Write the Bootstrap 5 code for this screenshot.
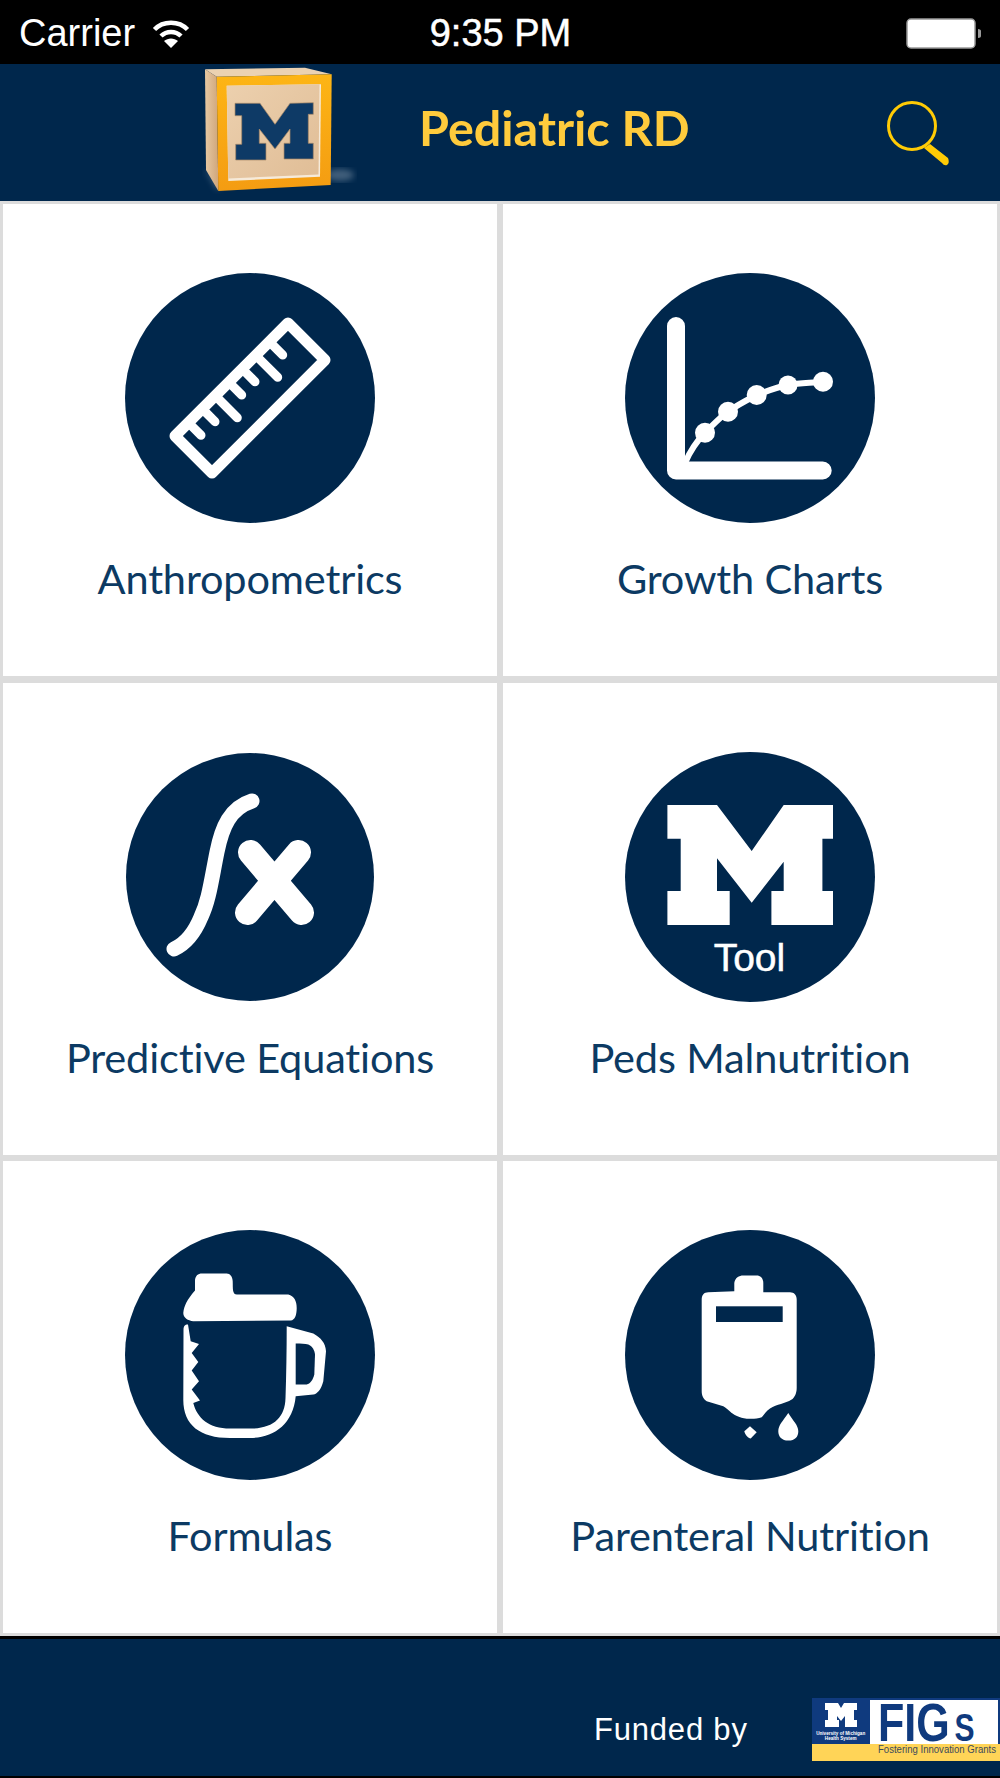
<!DOCTYPE html>
<html lang="en">
<head>
    <meta charset="UTF-8">
    <title>Pediatric RD</title>
    <link href="https://cdn.jsdelivr.net/npm/bootstrap@5.3.0/dist/css/bootstrap.min.css" rel="stylesheet">
    <style>
        html, body { background: #dcdcdc; }
        .app-screen { width: 1000px; height: 1778px; overflow: hidden; }

        .status-bar { height: 64px; background: #000; color: #fff; font-family: "Liberation Sans", Arial, sans-serif; padding: 3px 18px 0 19px; }
        .status-side { flex: 1 1 0; }
        .status-left { gap: 17px; font-size: 38px; }
        .status-time { width: 220px; text-align: center; font-size: 38px; -webkit-text-stroke: .5px #fff; }

        .app-header { height: 137px; background: #00274c; position: relative; }
        .header-block { position: absolute; left: 198px; top: 0; }
        .header-title { position: absolute; left: 419px; top: 34px; margin: 0; color: #ffcb3c; font-family: Lato, sans-serif; font-size: 48.500px; line-height: 58px; font-weight: 700; white-space: nowrap; font-variant-ligatures: none; }
        .header-search { position: absolute; left: 885px; top: 35px; }

        .tile-grid { display: grid; grid-template-columns: 494px 494px; grid-auto-rows: 472px; column-gap: 6px; row-gap: 6.500px; padding: 3px 3px 0; height: 1435px; }
        .tile-item { background: #fff; display: flex; flex-direction: column; align-items: center; padding-top: 69px; }
        .tile-icon { width: 250px; height: 250px; display: block; }
        .tile-label { margin-top: 30px; color: #0c3a63; font-family: Lato, sans-serif; font-size: 41.500px; line-height: 50px; letter-spacing: -.15px; white-space: nowrap; font-variant-ligatures: none; }

        .app-footer { height: 142px; background: #00274c; border-top: 3px solid #000; border-bottom: 2px solid #000; position: relative; }
        .funded-text { position: absolute; left: 594px; top: 73px; color: #fff; font-family: "Liberation Sans", Arial, sans-serif; font-size: 31px; line-height: 36px; letter-spacing: .8px; }
        .figs-logo { position: absolute; left: 812px; top: 49px; }
        .figs-logo text { font-family: "Liberation Sans", Arial, sans-serif; }
    </style>
</head>
<body class="m-0">
    <div class="app-screen d-flex flex-column">

        <!-- status bar -->
        <div class="status-bar d-flex align-items-center flex-shrink-0">
            <div class="status-side status-left d-flex align-items-center">
                <span>Carrier</span>
                <svg width="38" height="28" viewBox="0 0 38 28">
                    <path d="M2.500 9.500C11 .5 27 .5 35.500 9.500" fill="none" stroke="#fff" stroke-width="4.500"/>
                    <path d="M9 16C14.500 10.500 23.500 10.500 29 16" fill="none" stroke="#fff" stroke-width="4.500"/>
                    <path d="M19 28L12 21C16 17.500 22 17.500 26 21Z" fill="#fff"/>
                </svg>
            </div>
            <div class="status-time">9:35 PM</div>
            <div class="status-side d-flex justify-content-end align-items-center">
                <svg width="76" height="32" viewBox="0 0 76 32">
                    <rect x="1" y="1" width="68" height="29" rx="4" fill="#fff" stroke="#999" stroke-width="1.500"/>
                    <path d="M72 11c2 0 3 1 3 2v5c0 1-1 2-3 2z" fill="#999"/>
                </svg>
            </div>
        </div>

        <!-- header -->
        <div class="app-header flex-shrink-0">
            <svg class="header-block" width="160" height="137" viewBox="0 0 160 137">
                <defs>
                    <linearGradient id="woodSide" x1="0" x2="1"><stop offset="0" stop-color="#e6c8a2"/><stop offset="1" stop-color="#cfa67c"/></linearGradient>
                    <linearGradient id="woodFace" x1="0" y1="0" x2="1" y2="1"><stop offset="0" stop-color="#ecd0ae"/><stop offset="1" stop-color="#e0bd96"/></linearGradient>
                    <linearGradient id="frame" x1="0" y1="0" x2="0" y2="1"><stop offset="0" stop-color="#fdb515"/><stop offset="1" stop-color="#f49c12"/></linearGradient>
                    <filter id="blur3"><feGaussianBlur stdDeviation="3"/></filter>
                </defs>
                <ellipse cx="142" cy="111" rx="14" ry="6" fill="#a5b4c2" opacity=".4" filter="url(#blur3)"/>
                <path d="M6 104L20 127L24 118Z" fill="#7d93a8" opacity=".5" filter="url(#blur3)"/>
                <path d="M7 5.300L107 3.700L133.700 10.300L18.700 12.700Z" fill="#ebd2b2"/>
                <path d="M7 5.300L18.700 12.700L20.300 127L8 106Z" fill="url(#woodSide)"/>
                <path d="M18.700 12.700L133.700 10.300L132.700 121L20.300 127Z" fill="url(#frame)"/>
                <path d="M28.700 21.700L123 20.300L122 112.700L30.300 117Z" fill="#f6ead9"/>
                <path d="M28.700 21.700L121.500 20.300L120.500 110.500L30.300 114.500Z" fill="url(#woodFace)"/>
                <path d="M37 39.300H62L77 60.300L92 39.300L115.300 38.700V50.300H110.300V79.300H115.300V95H86V79.300H92V65L77 85L61.300 65V79.300H68V96H37.700V80.300H43.700V51.700H37Z" fill="#0e3a66" stroke="#a98a68" stroke-width=".7"/>
            </svg>
            <h1 class="header-title">Pediatric RD</h1>
            <svg class="header-search" width="68" height="68" viewBox="0 0 68 68">
                <circle cx="27" cy="27" r="23.500" fill="none" stroke="#ffcb05" stroke-width="3"/>
                <path d="M39 49L45 45L63 59Q65 64 62 66Q59 67 57 64Z" fill="#ffcb05"/>
            </svg>
        </div>

        <!-- tiles -->
        <div class="tile-grid flex-shrink-0">
            <div class="tile-item">
                <svg class="tile-icon" viewBox="0 0 250 250">
                    <circle cx="125" cy="125" r="125" fill="#00274c"/>
                    <path d="M50 163L163 50L200 87L87 200Z" fill="none" stroke="#fff" stroke-width="11" stroke-linejoin="round"/>
                    <path d="M144.700 69L157.700 82M131 82.600L152.700 104.300M117.400 96.100L130 108.700M104 109.400L116.700 122M90.600 123L112.300 144.700M77.400 136L90 148.700M63.600 149.900L76 162.300" fill="none" stroke="#fff" stroke-width="9" stroke-linecap="round"/>
                </svg>
                <div class="tile-label">Anthropometrics</div>
            </div>
            <div class="tile-item">
                <svg class="tile-icon" viewBox="0 0 250 250">
                    <circle cx="125" cy="125" r="125" fill="#00274c"/>
                    <path d="M51 53V197.500H197.700" fill="none" stroke="#fff" stroke-width="18" stroke-linecap="round" stroke-linejoin="round"/>
                    <path d="M60 190C66 176 72 168 80 159.700C88 152 95 144 103 138.700C112 132 122 127 131.700 122C142 118 152 114 163 112C175 110 186 110 198 108.700" fill="none" stroke="#fff" stroke-width="6"/>
                    <circle cx="80" cy="159.700" r="10" fill="#fff"/>
                    <circle cx="103" cy="138.700" r="10" fill="#fff"/>
                    <circle cx="131.700" cy="122" r="10" fill="#fff"/>
                    <circle cx="163" cy="112" r="9.500" fill="#fff"/>
                    <circle cx="198" cy="108.700" r="10" fill="#fff"/>
                </svg>
                <div class="tile-label">Growth Charts</div>
            </div>
            <div class="tile-item">
                <svg class="tile-icon" viewBox="0 0 250 250">
                    <circle cx="125" cy="125" r="124" fill="#00274c"/>
                    <path d="M127 49C105 56 97 75 92 100C86 130 84 148 76 165C69 182 60 192 49 197" fill="none" stroke="#fff" stroke-width="15" stroke-linecap="round"/>
                    <path d="M125.500 100.500L176.500 160.500M173.500 100.500L122.500 160.500" fill="none" stroke="#fff" stroke-width="25" stroke-linecap="round"/>
                </svg>
                <div class="tile-label">Predictive Equations</div>
            </div>
            <div class="tile-item">
                <svg class="tile-icon" viewBox="0 0 250 250">
                    <circle cx="125" cy="125" r="125" fill="#00274c"/>
                    <path d="M42.400 53H92L126.700 99L158.700 53H208V86.700H197.400V139H208V173H146.400V139H158.700V109.700L126.700 150.700L92 106.300V139H104.700V173H42.400V139H55.700V86.700H42.400Z" fill="#fff"/>
                    <text x="124.400" y="219" text-anchor="middle" fill="#fff" stroke="#fff" stroke-width=".5" font-family="Liberation Sans, Arial, sans-serif" font-size="39">Tool</text>
                </svg>
                <div class="tile-label">Peds Malnutrition</div>
            </div>
            <div class="tile-item">
                <svg class="tile-icon" viewBox="0 0 250 250">
                    <circle cx="125" cy="125" r="125" fill="#00274c"/>
                    <path d="M58.300 83C59 76 62 70 70 60.600V51.300C70 46 73 43.600 77 43.600H101.700C105 43.600 107.700 47 107.700 51.300C108 58 107 64.600 112 64.600H163.300C169 66 171.700 71 171.700 78C171.700 85 170 90 165.700 90.600L68.300 91.300C63 90.500 58.300 88 58.300 83Z" fill="#fff"/>
                    <path d="M58.500 100C58.500 96 60 94.500 63 94.600L65.700 111.300L74 114L66.700 123L73.300 132L66.700 140.600L74 151.300L66.700 159.600L75 170.600L68.300 173C72 188 84 198.600 105 198.600H125C148 198.600 160 188 160.500 168C161.300 145 161.700 120 161.700 96.300L188.300 103.600C196 108 200.500 113 201 121.300L198.300 151.300C196 160 192 164 188.300 164.600L170.700 166.300C168 195 148 208 125 208H105C75 208 58.300 195 58.300 170Z" fill="#fff"/>
                    <path d="M170.700 113.600C176 113.600 180 113.800 183.300 114.600C187 116 189.500 120 190 124.600L189.300 144.600C188 150 185 154 181.700 154.600L170.700 154.600Z" fill="#00274c"/>
                </svg>
                <div class="tile-label">Formulas</div>
            </div>
            <div class="tile-item">
                <svg class="tile-icon" viewBox="0 0 250 250">
                    <circle cx="125" cy="125" r="125" fill="#00274c"/>
                    <path d="M109.300 61.300V53C110 48 114 45.600 118.300 45.600H131.700C135 45.600 138.300 48 138.300 53V62.300H165C169 62.300 171.700 65 171.700 69.600V158C171.700 164 169 168 166.700 169.600C160 174 152 174 145 178.600C141 181 139 185 136.700 187.300C132 189 127 189 121.700 188.700C114 188 110 185 106.700 183C103 180 101 177.500 98.300 176.300L81.700 171.300C78 169 76.700 165 76.700 161.300V69.600C76.700 65 79 62.300 83.300 62.300Z" fill="#fff"/>
                    <rect x="91" y="76.300" width="66.700" height="15.700" fill="#00274c"/>
                    <path d="M125 196.300L131.700 202.300L125.700 208.600C123 208 120 205 119.300 201.300Z" fill="#fff"/>
                    <path d="M163.300 183C158 191 153.300 195 153.300 201.300C153.300 207 157 210.600 163.300 210.600C170 210.600 173.300 207 173.300 201.300C173.300 195 168 191 163.300 183Z" fill="#fff"/>
                </svg>
                <div class="tile-label">Parenteral Nutrition</div>
            </div>
        </div>

        <!-- footer -->
        <div class="app-footer flex-shrink-0">
            <span class="funded-text">Funded by</span>
            <svg class="figs-logo" width="188" height="73" viewBox="0 -10 188 73">
                <rect width="188" height="63" fill="#ffd457"/>
                <rect width="188" height="46" fill="#0f3a7e"/>
                <rect x="58" y="2" width="128" height="44" fill="#fff"/>
                <path d="M13 5H26L29 10L32 5H45V12H42V22H45V29H33V18L29 23L25 18V22H27V29H13V22H16V12H13Z" fill="#fff"/>
                <text x="28.700" y="36.500" text-anchor="middle" fill="#fff" font-size="4.600" font-weight="700">University of Michigan</text>
                <text x="28.700" y="42" text-anchor="middle" fill="#fff" font-size="4.600" font-weight="700">Health System</text>
                <text transform="translate(66 42.700) scale(.79 1)" fill="#0f3a7e" font-size="54.500" font-weight="700">FIG</text>
                <text transform="translate(142.500 43.300) scale(.78 1)" fill="#0f3a7e" font-size="38.500" font-weight="700">S</text>
                <text transform="translate(66 55.300) scale(.87 1)" fill="#3b4a5c" font-size="11">Fostering Innovation Grants</text>
            </svg>
        </div>
    </div>
    <script src="https://cdn.jsdelivr.net/npm/bootstrap@5.3.0/dist/js/bootstrap.bundle.min.js"></script>
</body>
</html>
